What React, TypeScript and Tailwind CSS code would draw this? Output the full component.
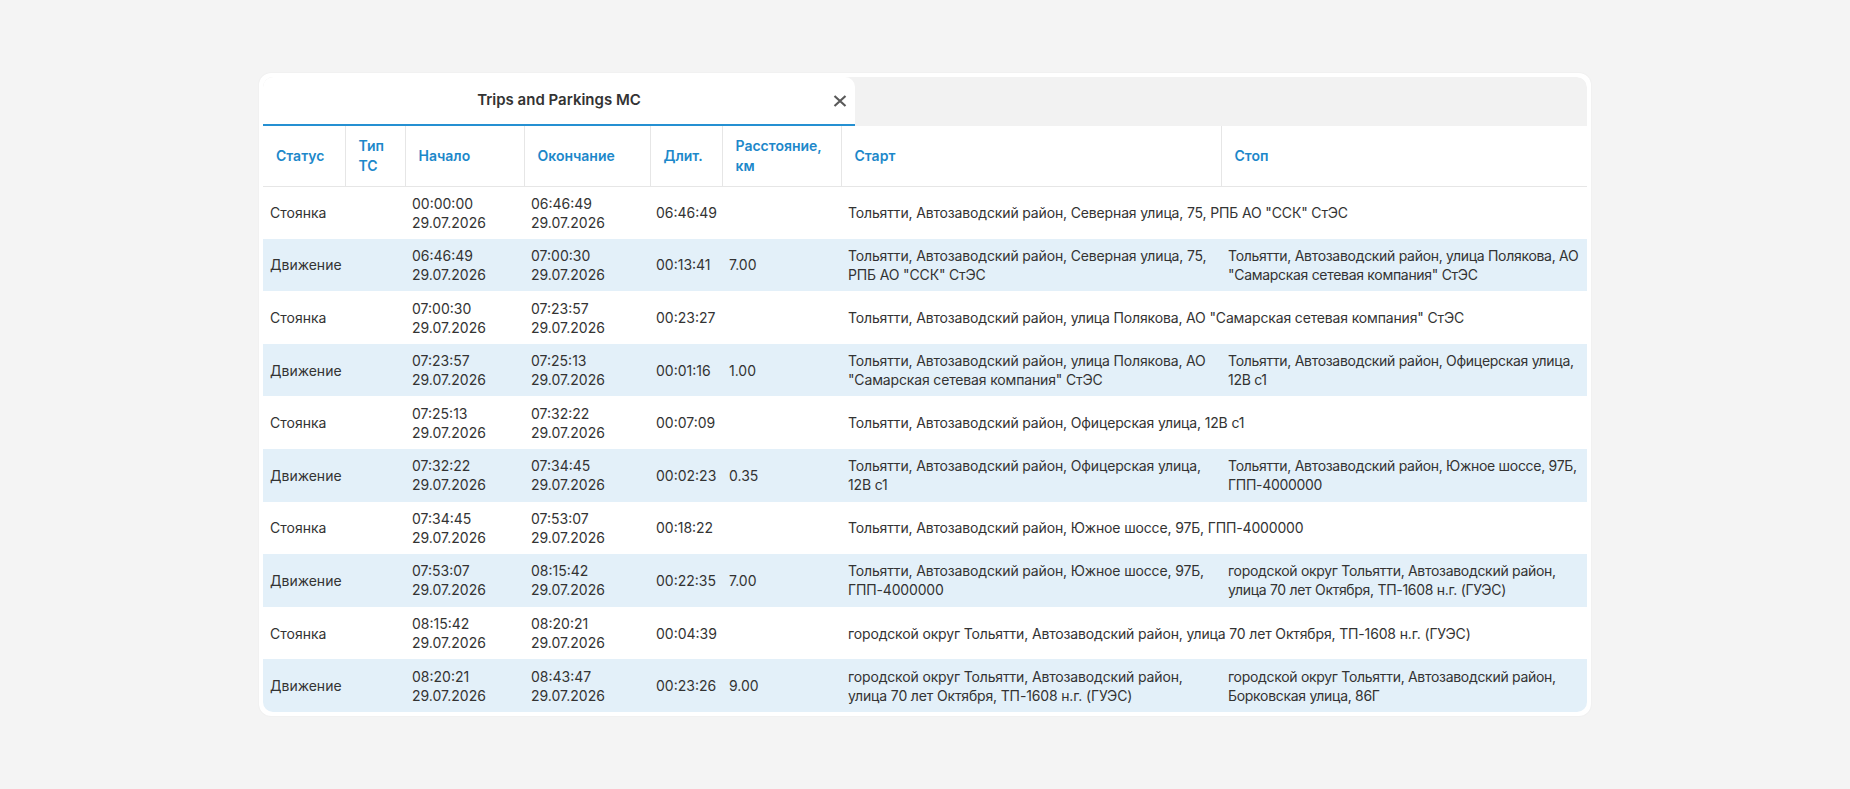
import React from "react";

type Row = {
  status: string;
  start: [string, string];
  end: [string, string];
  dur: string;
  dist?: string;
  from: string;
  to?: string;
};

const D = "29.07.2026";
const rows: Row[] = [
  { status: "Стоянка", start: ["00:00:00", D], end: ["06:46:49", D], dur: "06:46:49", from: 'Тольятти, Автозаводский район, Северная улица, 75, РПБ АО "ССК" СтЭС' },
  { status: "Движение", start: ["06:46:49", D], end: ["07:00:30", D], dur: "00:13:41", dist: "7.00", from: 'Тольятти, Автозаводский район, Северная улица, 75, РПБ АО "ССК" СтЭС', to: 'Тольятти, Автозаводский район, улица Полякова, АО "Самарская сетевая компания" СтЭС' },
  { status: "Стоянка", start: ["07:00:30", D], end: ["07:23:57", D], dur: "00:23:27", from: 'Тольятти, Автозаводский район, улица Полякова, АО "Самарская сетевая компания" СтЭС' },
  { status: "Движение", start: ["07:23:57", D], end: ["07:25:13", D], dur: "00:01:16", dist: "1.00", from: 'Тольятти, Автозаводский район, улица Полякова, АО "Самарская сетевая компания" СтЭС', to: "Тольятти, Автозаводский район, Офицерская улица, 12В с1" },
  { status: "Стоянка", start: ["07:25:13", D], end: ["07:32:22", D], dur: "00:07:09", from: "Тольятти, Автозаводский район, Офицерская улица, 12В с1" },
  { status: "Движение", start: ["07:32:22", D], end: ["07:34:45", D], dur: "00:02:23", dist: "0.35", from: "Тольятти, Автозаводский район, Офицерская улица, 12В с1", to: "Тольятти, Автозаводский район, Южное шоссе, 97Б, ГПП-4000000" },
  { status: "Стоянка", start: ["07:34:45", D], end: ["07:53:07", D], dur: "00:18:22", from: "Тольятти, Автозаводский район, Южное шоссе, 97Б, ГПП-4000000" },
  { status: "Движение", start: ["07:53:07", D], end: ["08:15:42", D], dur: "00:22:35", dist: "7.00", from: "Тольятти, Автозаводский район, Южное шоссе, 97Б, ГПП-4000000", to: "городской округ Тольятти, Автозаводский район, улица 70 лет Октября, ТП-1608 н.г. (ГУЭС)" },
  { status: "Стоянка", start: ["08:15:42", D], end: ["08:20:21", D], dur: "00:04:39", from: "городской округ Тольятти, Автозаводский район, улица 70 лет Октября, ТП-1608 н.г. (ГУЭС)" },
  { status: "Движение", start: ["08:20:21", D], end: ["08:43:47", D], dur: "00:23:26", dist: "9.00", from: "городской округ Тольятти, Автозаводский район, улица 70 лет Октября, ТП-1608 н.г. (ГУЭС)", to: "городской округ Тольятти, Автозаводский район, Борковская улица, 86Г" },
];

const headers: React.ReactNode[] = [
  "Статус",
  <>Тип<br />ТС</>,
  "Начало",
  "Окончание",
  "Длит.",
  <>Расстояние,<br />км</>,
  "Старт",
  "Стоп",
];

const widths = [82, 60, 119, 126, 72, 119, 380, 366];

export default function App() {
  return (
    <div
      className="flex h-[789px] w-full items-center justify-center bg-[#f4f4f4]"
      style={{ fontFamily: "Inter, 'Noto Sans', sans-serif" }}
    >
      <div className="w-[1332px] rounded-[12px] bg-white p-[4px] shadow-[0_0_2px_rgba(0,0,0,0.06)]">
        <div className="overflow-hidden rounded-[10px]">
          <div className="flex h-[49px] rounded-tr-[10px] bg-[#f2f2f2]">
            <div className="relative flex w-[592px] items-center justify-center rounded-t-[10px] border-b-2 border-[#2590d2] bg-white">
              <span className="text-[15px] font-semibold text-[#333]">Trips and Parkings MC</span>
              <svg
                className="absolute right-[8px] top-[18px]"
                width="14"
                height="12"
                viewBox="0 0 14 12"
              >
                <path d="M1.5 1 L12.5 11 M12.5 1 L1.5 11" stroke="#5a5a5a" strokeWidth="2.2" strokeLinecap="butt" />
              </svg>
            </div>
          </div>
          <table className="w-[1324px] table-fixed border-collapse">
            <colgroup>
              {widths.map((w, i) => (
                <col key={i} style={{ width: w }} />
              ))}
            </colgroup>
            <thead>
              <tr className="h-[60px] border-b border-[#e6e6e6]">
                {headers.map((h, i) => (
                  <th
                    key={i}
                    className={`px-[13px] text-left align-middle text-[14px] font-semibold leading-[20px] text-[#1d88ca] ${i < 7 ? "border-r border-[#e6e6e6]" : ""}`}
                  >
                    {h}
                  </th>
                ))}
              </tr>
            </thead>
            <tbody>
              {rows.map((r, i) => (
                <tr key={i} className={`h-[52.6px] text-[14px] leading-[19px] text-[#333] ${i % 2 === 1 ? "bg-[#e3f0f9]" : "bg-white"}`}>
                  <td className="px-[7px] align-middle">{r.status}</td>
                  <td className="px-[7px] align-middle"></td>
                  <td className="px-[7px] align-middle">
                    {r.start[0]}
                    <br />
                    {r.start[1]}
                  </td>
                  <td className="px-[7px] align-middle">
                    {r.end[0]}
                    <br />
                    {r.end[1]}
                  </td>
                  <td className="px-[6px] align-middle">{r.dur}</td>
                  <td className="px-[7px] align-middle">{r.dist ?? ""}</td>
                  {r.to ? (
                    <>
                      <td className="px-[7px] align-middle tracking-[-0.15px]">{r.from}</td>
                      <td className="pl-[7px] pr-0 align-middle tracking-[-0.3px]">{r.to}</td>
                    </>
                  ) : (
                    <td colSpan={2} className="px-[7px] align-middle tracking-[-0.15px]">
                      {r.from}
                    </td>
                  )}
                </tr>
              ))}
            </tbody>
          </table>
        </div>
      </div>
    </div>
  );
}
